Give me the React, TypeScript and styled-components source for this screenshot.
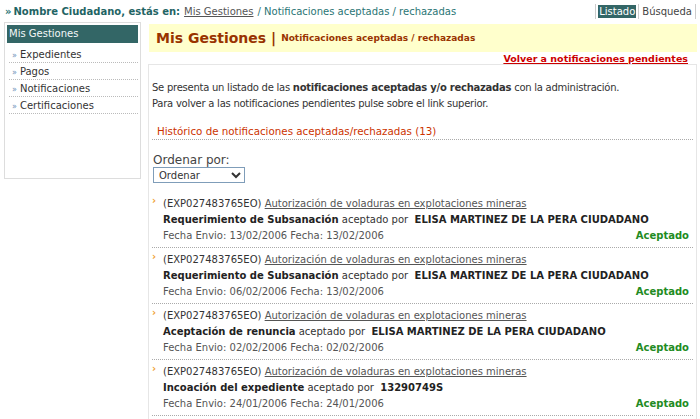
import React, { FC } from "react";
import styled, { createGlobalStyle } from "styled-components";

const GlobalStyle = createGlobalStyle`
  html, body {
    margin: 0;
    padding: 0;
    background: #ffffff;
  }
  body {
    font-family: "DejaVu Sans", Verdana, sans-serif;
    font-size: 10px;
    color: #333333;
  }
`;

type Item = {
  exp: string;
  title: string;
  action: string;
  by: string;
  sent: string;
  date: string;
};

const items: Item[] = [
  {
    exp: "(EXP027483765EO)",
    title: "Autorización de voladuras en explotaciones mineras",
    action: "Requerimiento de Subsanación",
    by: "ELISA MARTINEZ DE LA PERA CIUDADANO",
    sent: "13/02/2006",
    date: "13/02/2006",
  },
  {
    exp: "(EXP027483765EO)",
    title: "Autorización de voladuras en explotaciones mineras",
    action: "Requerimiento de Subsanación",
    by: "ELISA MARTINEZ DE LA PERA CIUDADANO",
    sent: "06/02/2006",
    date: "13/02/2006",
  },
  {
    exp: "(EXP027483765EO)",
    title: "Autorización de voladuras en explotaciones mineras",
    action: "Aceptación de renuncia",
    by: "ELISA MARTINEZ DE LA PERA CIUDADANO",
    sent: "02/02/2006",
    date: "02/02/2006",
  },
  {
    exp: "(EXP027483765EO)",
    title: "Autorización de voladuras en explotaciones mineras",
    action: "Incoación del expediente",
    by: "13290749S",
    sent: "24/01/2006",
    date: "24/01/2006",
  },
];

const menu = ["Expedientes", "Pagos", "Notificaciones", "Certificaciones"];

const App: FC = () => {
  return (
    <>
      <GlobalStyle />
      <Page>
        <TopBar>
          <Crumbs>
            <Raquo>»</Raquo>
            <Who>Nombre Ciudadano, estás en:</Who>
            <CrumbLink href="#">Mis Gestiones</CrumbLink>
            <span>/ Notificaciones aceptadas / rechazadas</span>
          </Crumbs>
          <Tabs>
            <Sep />
            <Tab active>Listado</Tab>
            <Sep />
            <Tab>Búsqueda</Tab>
            <Sep />
          </Tabs>
        </TopBar>
        <Body>
          <Sidebar>
            <SideTitle>Mis Gestiones</SideTitle>
            <SideList>
              {menu.map((m) => (
                <SideItem key={m}>
                  <SideMark>»</SideMark>
                  {m}
                </SideItem>
              ))}
            </SideList>
          </Sidebar>
          <Main>
            <Banner>
              <BannerTitle>Mis Gestiones |</BannerTitle>
              <BannerSub>Notificaciones aceptadas / rechazadas</BannerSub>
            </Banner>
            <BackRow>
              <BackLink href="#">Volver a notificaciones pendientes</BackLink>
            </BackRow>
            <Content>
              <Intro>
                Se presenta un listado de las{" "}
                <b>notificaciones aceptadas y/o rechazadas</b> con la
                administración.
                <br />
                Para volver a las notificaciones pendientes pulse sobre el link
                superior.
              </Intro>
              <History>Histórico de notificaciones aceptadas/rechazadas (13)</History>
              <SortLabel>Ordenar por:</SortLabel>
              <SortSelect defaultValue="o">
                <option value="o">Ordenar</option>
              </SortSelect>
              <List>
                {items.map((it, i) => (
                  <Entry key={i}>
                    <Bullet>›</Bullet>
                    <EntryBody>
                      <div>
                        {it.exp} <TitleLink href="#">{it.title}</TitleLink>
                      </div>
                      <div>
                        <b>{it.action}</b> aceptado por&nbsp; <b>{it.by}</b>
                      </div>
                      <DateRow>
                        <span>
                          Fecha Envio: {it.sent} Fecha: {it.date}
                        </span>
                        <Status>Aceptado</Status>
                      </DateRow>
                    </EntryBody>
                  </Entry>
                ))}
              </List>
            </Content>
          </Main>
        </Body>
      </Page>
    </>
  );
};

const Page = styled.div`
  width: 700px;
  height: 419px;
  overflow: hidden;
`;

const TopBar = styled.div`
  display: flex;
  justify-content: space-between;
  align-items: center;
  height: 22px;
  padding: 0 4px 0 5px;
`;

const Crumbs = styled.div`
  color: #2a7575;
  white-space: nowrap;
  font-size: 10px;
`;

const Raquo = styled.span`
  font-weight: bold;
  margin-right: 2px;
`;

const Who = styled.span`
  font-weight: bold;
  color: #1f6464;
  margin-right: 4px;
`;

const CrumbLink = styled.a`
  color: #555555;
  text-decoration: underline;
  margin-right: 4px;
`;

const Tabs = styled.div`
  display: flex;
  align-items: center;
  gap: 2px;
`;

const Sep = styled.span`
  width: 1px;
  height: 15px;
  background: #cccccc;
`;

const Tab = styled.span<{ active?: boolean }>`
  padding: 1px 1px;
  color: ${(p) => (p.active ? "#ffffff" : "#444444")};
  background: ${(p) => (p.active ? "#336666" : "transparent")};
`;

const Body = styled.div`
  display: flex;
  align-items: flex-start;
  gap: 7px;
  padding-left: 4px;
`;

const Sidebar = styled.div`
  width: 131px;
  height: 151px;
  border: 1px solid #dddddd;
  padding: 2px;
  flex-shrink: 0;
`;

const SideTitle = styled.div`
  background: #336666;
  color: #f4f8f8;
  height: 18px;
  line-height: 18px;
  padding-left: 2px;
  font-size: 10px;
`;

const SideList = styled.div`
  padding: 3px 0 0 2px;
`;

const SideItem = styled.div`
  height: 16px;
  line-height: 17px;
  border-bottom: 1px dotted #bbbbbb;
  color: #333333;
`;

const SideMark = styled.span`
  color: #6b8fb8;
  font-size: 8px;
  margin: 0 3px 0 3px;
`;

const Main = styled.div`
  flex: 1;
  padding-top: 2px;
  padding-right: 3px;
`;

const Banner = styled.div`
  background: #ffffcc;
  height: 28px;
  display: flex;
  align-items: center;
  padding-left: 7px;
  gap: 5px;
  margin-left: 1px;
`;

const BannerTitle = styled.span`
  color: #993300;
  font-weight: bold;
  font-size: 14px;
`;

const BannerSub = styled.span`
  color: #993300;
  font-weight: bold;
  font-size: 9px;
`;

const BackRow = styled.div`
  text-align: right;
  height: 12px;
  line-height: 13px;
  padding-right: 9px;
`;

const BackLink = styled.a`
  color: #cc0000;
  font-weight: bold;
  font-size: 9.5px;
  text-decoration: underline;
`;

const Content = styled.div`
  border: 1px solid #e6e6e6;
  border-bottom: none;
  height: 360px;
  padding: 15px 3px 0 3px;
`;

const Intro = styled.p`
  margin: 0;
  line-height: 16px;
  color: #333333;
  letter-spacing: -0.25px;
`;

const History = styled.div`
  color: #cc3300;
  font-size: 10.3px;
  margin: 12px 0 0 0;
  padding: 0 0 1px 5px;
  border-bottom: 1px dotted #aaaaaa;
  line-height: 14px;
`;

const SortLabel = styled.div`
  font-size: 12px;
  color: #444444;
  margin-top: 13px;
  line-height: 14px;
  padding-left: 1px;
`;

const SortSelect = styled.select`
  display: block;
  width: 92px;
  height: 16px;
  font-family: "DejaVu Sans", Verdana, sans-serif;
  font-size: 10px;
  color: #333333;
  border: 1px solid #7f9db9;
  padding: 0 0 0 1px;
  margin: 0 0 0 1px;
  background: #ffffff;
`;

const List = styled.div`
  margin-top: 9px;
`;

const Entry = styled.div`
  display: flex;
  gap: 3px;
  border-bottom: 1px dotted #aaaaaa;
  padding: 4px 0 3px 0;
  line-height: 16px;
`;

const Bullet = styled.span`
  color: #f0a030;
  font-weight: bold;
  font-size: 10px;
  line-height: 10px;
  width: 8px;
`;

const EntryBody = styled.div`
  flex: 1;
  padding-right: 4px;
  color: #333333;

  b {
    color: #222222;
  }
`;

const TitleLink = styled.a`
  color: #555555;
  text-decoration: underline;
`;

const DateRow = styled.div`
  display: flex;
  justify-content: space-between;
  color: #555555;
`;

const Status = styled.span`
  color: #228b22;
  font-weight: bold;
`;

export default App;
